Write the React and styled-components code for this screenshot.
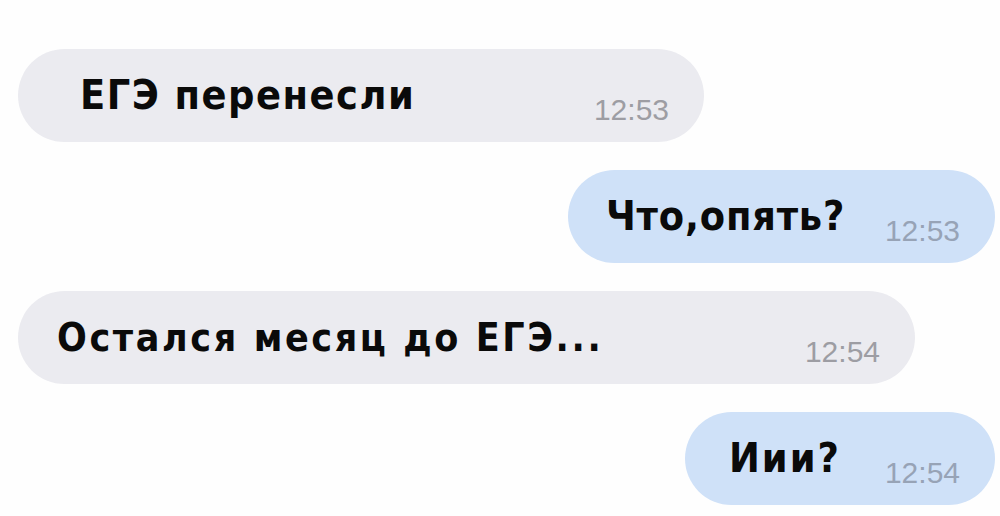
import React from "react";
import styled, { createGlobalStyle } from "styled-components";

const messages = [
  { text: "ЕГЭ перенесли", time: "12:53", mine: false, width: 686, pad: 62, size: 41, spacing: 1.5 },
  { text: "Что,опять?", time: "12:53", mine: true, width: 427, pad: 38, size: 41, spacing: 0.8 },
  { text: "Остался месяц до ЕГЭ...", time: "12:54", mine: false, width: 897, pad: 39, size: 39, spacing: 2.6 },
  { text: "Иии?", time: "12:54", mine: true, width: 310, pad: 44, size: 41, spacing: 2 },
];

const App = () => {
  return (
    <>
      <GlobalStyle />
      <Chat>
        {messages.map((m, i) => (
          <Bubble key={i} $mine={m.mine} $width={m.width} $pad={m.pad}>
            <Text $size={m.size} $spacing={m.spacing}>
              {m.text}
            </Text>
            <Time $mine={m.mine}>{m.time}</Time>
          </Bubble>
        ))}
      </Chat>
    </>
  );
};

export default App;

const GlobalStyle = createGlobalStyle`
  html, body {
    margin: 0;
    padding: 0;
    background: #fefefe;
  }
`;

const Chat = styled.div`
  width: 1000px;
  height: 516px;
  box-sizing: border-box;
  padding: 49px 5px 0 18px;
  display: flex;
  flex-direction: column;
  gap: 28px;
`;

const Bubble = styled.div`
  width: ${(props) => props.$width}px;
  height: 93px;
  box-sizing: border-box;
  align-self: ${(props) => (props.$mine ? "flex-end" : "flex-start")};
  background-color: ${(props) => (props.$mine ? "#cfe1f8" : "#ebebf0")};
  border-radius: 47px;
  padding: 0 35px 0 ${(props) => props.$pad}px;
  display: flex;
  align-items: center;
`;

const Text = styled.span`
  font-family: "DejaVu Sans Condensed", "DejaVu Sans", sans-serif;
  font-stretch: condensed;
  font-weight: bold;
  font-size: ${(props) => props.$size}px;
  letter-spacing: ${(props) => props.$spacing}px;
  line-height: 1;
  color: #0a0a0a;
  white-space: nowrap;
`;

const Time = styled.span`
  margin-left: auto;
  margin-top: 28px;
  font-family: "Liberation Sans", Arial, sans-serif;
  font-size: 30px;
  line-height: 1;
  color: ${(props) => (props.$mine ? "#97a3b6" : "#9d9da3")};
`;
